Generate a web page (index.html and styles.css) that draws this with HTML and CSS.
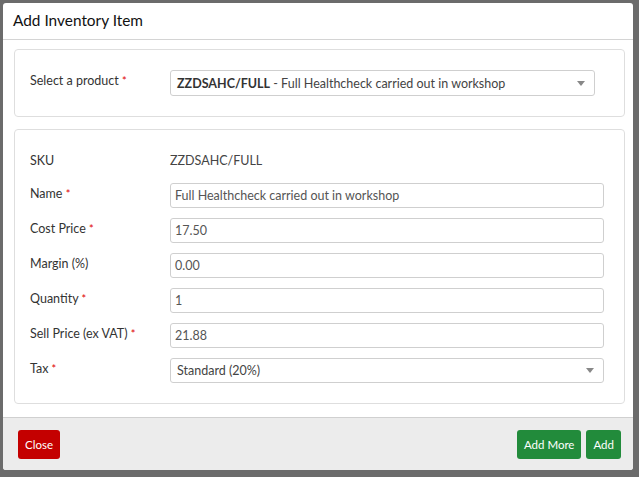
FILE: index.html
```html
<!DOCTYPE html>
<html>
<head>
<meta charset="utf-8">
<link rel="stylesheet" href="styles.css">
</head>
<body>
<div class="modal">
  <div class="modal-header">Add Inventory Item</div>
  <div class="modal-body">
    <div class="panel panel-product">
      <div class="row">
        <div class="label">Select a product <span class="req">*</span></div>
        <div class="select select-product">
          <span><b>ZZDSAHC/FULL</b> - Full Healthcheck carried out in workshop</span>
          <span class="caret"></span>
        </div>
      </div>
    </div>
    <div class="panel panel-form">
      <div class="row">
        <div class="label label-static">SKU</div>
        <div class="static">ZZDSAHC/FULL</div>
      </div>
      <div class="row">
        <div class="label">Name <span class="req">*</span></div>
        <div class="input">Full Healthcheck carried out in workshop</div>
      </div>
      <div class="row">
        <div class="label">Cost Price <span class="req">*</span></div>
        <div class="input">17.50</div>
      </div>
      <div class="row">
        <div class="label">Margin (%)</div>
        <div class="input">0.00</div>
      </div>
      <div class="row">
        <div class="label">Quantity <span class="req">*</span></div>
        <div class="input">1</div>
      </div>
      <div class="row">
        <div class="label">Sell Price (ex VAT) <span class="req">*</span></div>
        <div class="input">21.88</div>
      </div>
      <div class="row">
        <div class="label">Tax <span class="req">*</span></div>
        <div class="select select-tax">
          <span>Standard (20%)</span>
          <span class="caret"></span>
        </div>
      </div>
    </div>
  </div>
  <div class="modal-footer">
    <button class="btn btn-red">Close</button>
    <div class="right">
      <button class="btn btn-green">Add More</button>
      <button class="btn btn-green">Add</button>
    </div>
  </div>
</div>
</body>
</html>
```

FILE: styles.css
```css
* { box-sizing: border-box; }
html, body {
  margin: 0;
  padding: 0;
  height: 100%;
}
body {
  background: #6b6b6b;
  font-family: Lato, "Open Sans", sans-serif;
  color: #333;
  padding: 3px 0 0 3px;
}
.modal {
  width: 630px;
  height: 467px;
  background: #fff;
  border-radius: 3px;
  display: flex;
  flex-direction: column;
  overflow: hidden;
}
.modal-header {
  height: 37px;
  border-bottom: 1px solid #d4d4d4;
  padding: 8px 10px 0;
  font-size: 15.4px;
  color: #111;
}
.modal-body {
  flex: 1;
  padding: 9px 8px 0 11px;
  display: flex;
  flex-direction: column;
  gap: 12px;
}
.panel {
  border: 1px solid #dedede;
  border-radius: 4px;
  padding: 0 20px 0 15px;
}
.panel-product {
  height: 68px;
  display: flex;
  align-items: center;
}
.panel-product .row { width: 100%; }
.panel-form {
  height: 275px;
  padding-top: 18px;
  display: flex;
  flex-direction: column;
  gap: 10px;
}
.row {
  display: grid;
  grid-template-columns: 140px 1fr;
  align-items: center;
  min-height: 25px;
}
.label {
  font-size: 12.5px;
  color: #333;
  align-self: start;
  padding-top: 3px;
}
.label-static { padding-top: 5px; }
.req { color: #e00000; font-size: 11px; }
.static {
  font-size: 12.5px;
  color: #444;
  align-self: start;
  padding-top: 5px;
}
.input, .select {
  height: 25px;
  border: 1px solid #cfcfcf;
  border-radius: 3px;
  font-size: 12.5px;
  color: #555;
  padding: 0 4px;
  display: flex;
  align-items: center;
}
.select {
  justify-content: space-between;
  padding-right: 9px;
}
.select-product {
  width: 425px;
  height: 26px;
  color: #444;
  padding-left: 6px;
}
.select-product b { color: #333; }
.caret {
  width: 0;
  height: 0;
  border-left: 4px solid transparent;
  border-right: 4px solid transparent;
  border-top: 5px solid #888;
}
.select-tax { padding-left: 6px; color: #444; }
.modal-footer {
  height: 53px;
  background: #ececec;
  border-top: 1px solid #d0d0d0;
  padding: 12px 12px 0 15px;
  display: flex;
  justify-content: space-between;
  align-items: flex-start;
}
.right { display: flex; gap: 5px; }
.btn {
  height: 29px;
  border: none;
  border-radius: 3px;
  color: #fff;
  font-family: Lato, "Open Sans", sans-serif;
  font-size: 11.5px;
  padding: 0 7px;
}
.btn-red { background: #c40000; width: 42px; padding: 0; }
.btn-green { background: #228b3b; }
```
